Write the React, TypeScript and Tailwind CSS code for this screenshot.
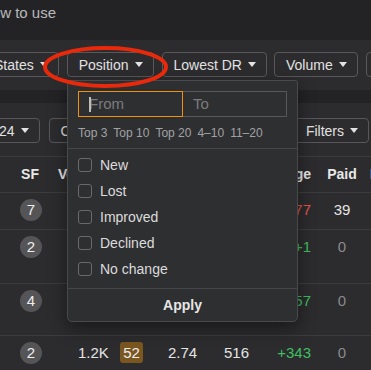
import React from 'react';

const Caret = () => (
    <svg width="8" height="5" viewBox="0 0 8 5" className="shrink-0">
        <path d="M0 0 L8 0 L4 5 Z" fill="currentColor" />
    </svg>
);

const Btn: React.FC<{ label: string; className?: string }> = ({ label, className = '' }) => (
    <div className={`flex h-[25px] shrink-0 items-center gap-[6px] rounded-[4px] border border-[#58585a] pl-[11px] pr-[10px] text-[14px] leading-none text-[#e2e2e2] ${className}`}>
        <span className="whitespace-nowrap">{label}</span>
        <Caret />
    </div>
);

type Row = { sf: number; vol: string; kd: string; cpc: string; traffic: string; change: string; paid: string; h: string };

const rows: Row[] = [
    { sf: 7, vol: '3.4K', kd: '41', cpc: '1.90', traffic: '902', change: '-77', paid: '39', h: 'h-[37px]' },
    { sf: 2, vol: '2.1K', kd: '38', cpc: '3.12', traffic: '644', change: '+1', paid: '0', h: 'h-[54px]' },
    { sf: 4, vol: '1.6K', kd: '29', cpc: '0.85', traffic: '588', change: '+57', paid: '0', h: 'h-[52px]' },
    { sf: 2, vol: '1.2K', kd: '52', cpc: '2.74', traffic: '516', change: '+343', paid: '0', h: 'h-[40px]' },
];

const checks = ['New', 'Lost', 'Improved', 'Declined', 'No change'];
const quick = ['Top 3', 'Top 10', 'Top 20', '4–10', '11–20'];

export default function App() {
    return (
        <div className="relative h-[370px] w-[371px] overflow-hidden bg-[#2c2c2e] font-['Liberation_Sans',Arial,sans-serif]">

            {/* Barra superior */}
            <div className="h-[40px] overflow-hidden bg-[#232325]">
                <span className="ml-[-19px] whitespace-nowrap text-[15px] leading-[25px] text-[#b9b9bb]">How to use</span>
            </div>

            {/* Filtros 1 */}
            <div className="flex h-[50px] gap-[8px] overflow-hidden bg-[#2c2c2e] pt-[12px]">
                <Btn label="States" className="ml-[-18px]" />
                <Btn label="Position" />
                <Btn label="Lowest DR" />
                <Btn label="Volume" className="ml-[-1px]" />
                <Btn label="Traffic" />
            </div>

            <div className="h-[13px] bg-[#232325]" />

            {/* Filtros 2 */}
            <div className="flex h-[54px] items-start gap-[9px] overflow-hidden border-b border-[#3c3c3e] pt-[15px]">
                <Btn label="24" className="ml-[-13px]" />
                <Btn label="Compare" />
                <Btn label="Filters" className="ml-auto mr-[2px]" />
            </div>

            {/* Tabla */}
            <div className="flex h-[36px] items-center overflow-hidden border-b border-[#3c3c3e] text-[14px] font-bold text-[#e8e8e8]">
                <div className="w-[56px] shrink-0 pl-[4px] text-center">SF</div>
                <div className="w-[56px] shrink-0 pl-[2px]">Volume</div>
                <div className="w-[44px] shrink-0">KD</div>
                <div className="w-[54px] shrink-0">CPC</div>
                <div className="w-[55px] shrink-0">Traffic</div>
                <div className="flex w-[53px] shrink-0 justify-end whitespace-nowrap pr-[7px]">Change</div>
                <div className="w-[48px] shrink-0 text-center">Paid</div>
                <div className="shrink-0 pl-[4px]">Links</div>
            </div>

            {rows.map((r, i) => (
                <div key={i} className={`flex items-start border-b border-[#3c3c3e] pt-[6px] text-[15px] leading-[22px] ${r.h}`}>
                    <div className="flex w-[56px] shrink-0 justify-center pl-[6px]">
                        <span className="flex h-[22px] w-[22px] items-center justify-center rounded-full bg-[#555557] text-[#eeeeee]">{r.sf}</span>
                    </div>
                    <div className="w-[56px] shrink-0 pl-[22px] text-[#e4e4e4]">{r.vol}</div>
                    <div className="w-[44px] shrink-0 pl-[8px]">
                        <span className="flex h-[21px] w-[23px] items-center justify-center rounded-[3px] bg-[#7a5720] text-[#eeeeee]">{r.kd}</span>
                    </div>
                    <div className="w-[54px] shrink-0 pl-[12px] text-[#e4e4e4]">{r.cpc}</div>
                    <div className="w-[55px] shrink-0 pl-[14px] text-[#e4e4e4]">{r.traffic}</div>
                    <div className={`w-[53px] shrink-0 pr-[7px] text-right ${r.change.startsWith('-') ? 'text-[#e5534b]' : 'text-[#3fbf62]'}`}>{r.change}</div>
                    <div className={`w-[48px] shrink-0 text-center ${r.paid === '0' ? 'text-[#8a8a8c]' : 'text-[#e4e4e4]'}`}>{r.paid}</div>
                </div>
            ))}

            {/* Desplegable de posición */}
            <div className="absolute left-[67px] top-[80px] z-10 w-[231px] rounded-b-[5px] rounded-t-[3px] border border-[#4a4a4c] bg-[#2e2f31] shadow-[0_6px_18px_rgba(0,0,0,0.45)]">
                <div className="px-[10px] pt-[10px]">
                    <div className="flex h-[26px]">
                        <div className="relative flex w-[105px] items-center border border-[#f0900c] pl-[10px] text-[15px] text-[#7c7c7e]">
                            <span className="absolute left-[10px] top-[5px] h-[15px] w-[1.5px] bg-[#bdbdbd]" />
                            From
                        </div>
                        <div className="flex flex-1 items-center border border-l-0 border-[#58585a] pl-[10px] text-[15px] text-[#7c7c7e]">To</div>
                    </div>
                    <div className="flex h-[31px] items-center gap-[6px] text-[12px] text-[#a2a2a4]">
                        {quick.map(q => <span key={q} className="whitespace-nowrap">{q}</span>)}
                    </div>
                </div>
                <div className="border-t border-[#464648] pb-[6px] pt-[3px]">
                    {checks.map(c => (
                        <div key={c} className="flex h-[26px] items-center gap-[8px] pl-[10px]">
                            <span className="h-[14px] w-[14px] rounded-[3px] border border-[#6a6a6c]" />
                            <span className="text-[14px] text-[#dcdcdc]">{c}</span>
                        </div>
                    ))}
                </div>
                <div className="flex h-[33px] items-center justify-center border-t border-[#464648] text-[14px] font-bold text-[#e6e6e6]">
                    Apply
                </div>
            </div>

            {/* Marca roja */}
            <svg className="absolute left-[40px] top-[43px] z-20" width="132" height="48" viewBox="0 0 132 48">
                <ellipse cx="65.5" cy="24" rx="60.5" ry="19" fill="none" stroke="#e8290b" strokeWidth="4" />
            </svg>
        </div>
    );
}
